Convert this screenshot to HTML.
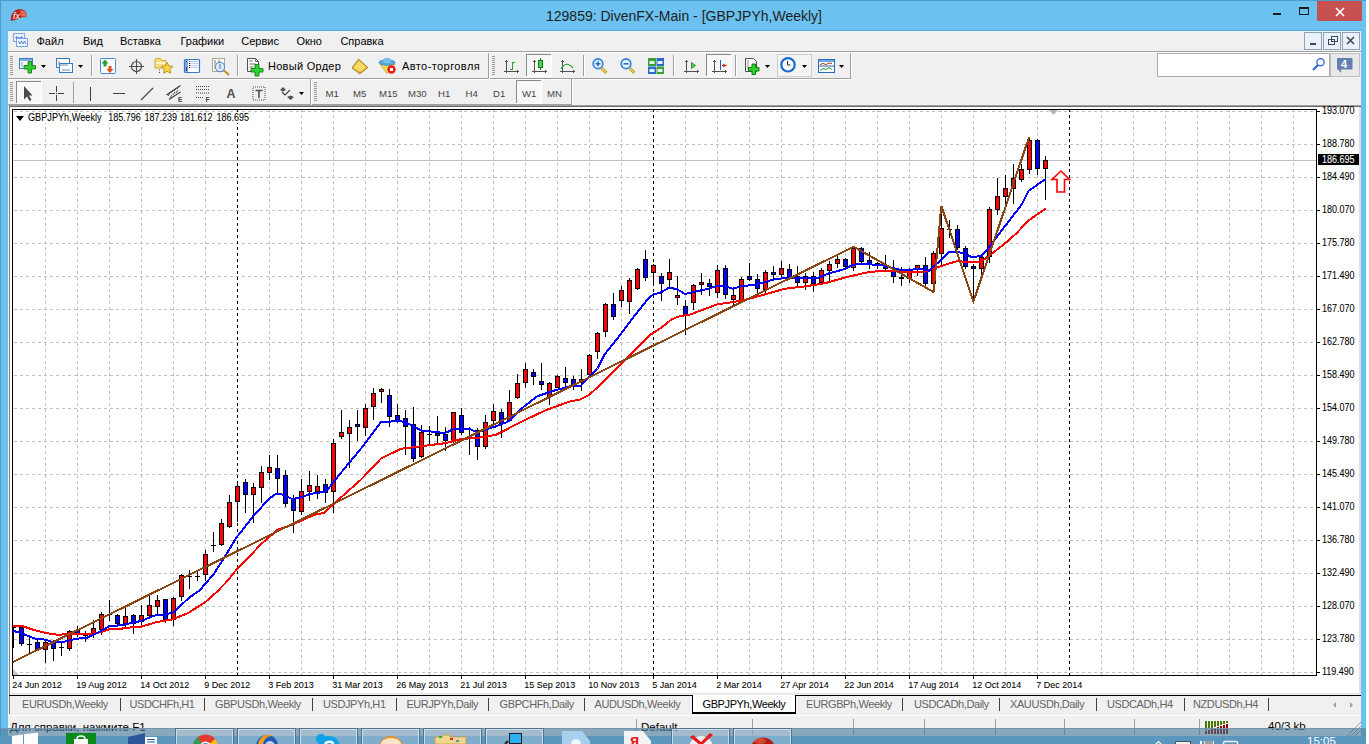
<!DOCTYPE html><html><head><meta charset="utf-8"><style>html,body{margin:0;padding:0;width:1369px;height:744px;overflow:hidden;background:#fff}svg{display:block}text{font-family:"Liberation Sans", sans-serif}</style></head><body>
<svg width="1369" height="744" viewBox="0 0 1369 744">
<rect x="0" y="0" width="1366" height="744" fill="#6bc1ef"/>
<rect x="0" y="0" width="1366" height="1" fill="#4f9bcb"/>
<rect x="0" y="0" width="1" height="744" fill="#4f9bcb"/>
<path d="M11,21 C10,15 14,9 20,9 C24,9 27,12 27,16 C26,17 24,18 22,17 C20,18 17,20 11,21 Z" fill="#b8251b"/>
<path d="M20,10 C24,10 27,13 27,16 C25,17 23,17 21,16 Z" fill="#e06a5a"/>
<text x="13" y="19" font-size="9" font-style="italic" fill="#fff" font-family="Liberation Serif">fx</text>
<text x="546" y="21" font-size="14" fill="#1e1e1e">129859: DivenFX-Main - [GBPJPYh,Weekly]</text>
<rect x="1273" y="13" width="8" height="2" fill="#1a1a1a"/>
<rect x="1299.5" y="7.5" width="9" height="7" fill="none" stroke="#1a1a1a" stroke-width="1"/><rect x="1299" y="7" width="10" height="2" fill="#1a1a1a"/>
<rect x="1317" y="1" width="45" height="20" fill="#c75050"/>
<path d="M1336,8 L1344,16 M1344,8 L1336,16" stroke="#fff" stroke-width="1.6"/>
<rect x="8" y="30" width="1353" height="1" fill="#5aaadc"/>
<rect x="8" y="31" width="1353" height="697" fill="#f0f0f0"/>
<rect x="13.5" y="33.5" width="11" height="8" fill="#eef4ff" stroke="#2f6fe0" stroke-dasharray="1.2 0.8"/>
<path d="M16,37.5 h6 M17,36 l-1.5,1.5 l1.5,1.5 M21,36 l1.5,1.5 l-1.5,1.5" stroke="#4a80d8" fill="none" stroke-width="0.8"/>
<rect x="16.5" y="38.5" width="11" height="8" fill="#eef4ff" stroke="#2f6fe0" stroke-dasharray="1.2 0.8"/>
<path d="M18.5,41 l1.5,3 l1.5,-3 l1.5,3 l1.5,-3 l1.5,3" stroke="#3a70d0" fill="none" stroke-width="0.8"/>
<text x="36.5" y="45" font-size="11" fill="#000">Файл</text>
<text x="83" y="45" font-size="11" fill="#000">Вид</text>
<text x="120" y="45" font-size="11" fill="#000">Вставка</text>
<text x="180.5" y="45" font-size="11" fill="#000">Графики</text>
<text x="241.3" y="45" font-size="11" fill="#000">Сервис</text>
<text x="296.4" y="45" font-size="11" fill="#000">Окно</text>
<text x="340.4" y="45" font-size="11" fill="#000">Справка</text>
<rect x="1304.5" y="32.5" width="17" height="17" fill="#eaf1f8" stroke="#8ea3b8"/>
<rect x="1310" y="43" width="6" height="2" fill="#404a55"/>
<rect x="1323.5" y="32.5" width="17" height="17" fill="#eaf1f8" stroke="#8ea3b8"/>
<rect x="1328.5" y="39.5" width="6" height="5" fill="none" stroke="#404a55"/><rect x="1331.5" y="36.5" width="6" height="5" fill="none" stroke="#404a55"/>
<rect x="1342.5" y="32.5" width="17" height="17" fill="#eaf1f8" stroke="#8ea3b8"/>
<path d="M1347,37 l7,7 M1354,37 l-7,7" stroke="#404a55" stroke-width="1.6"/>
<rect x="8" y="51" width="1353" height="1" fill="#a0a0a0"/>
<rect x="8" y="52" width="1353" height="1" fill="#ffffff"/>
<rect x="8" y="78" width="481" height="1" fill="#a0a0a0"/>
<rect x="8" y="79" width="482" height="1" fill="#ffffff"/>
<rect x="488" y="53" width="1" height="26" fill="#a0a0a0"/>
<rect x="489" y="53" width="1" height="27" fill="#ffffff"/>
<rect x="490" y="78" width="361" height="1" fill="#a0a0a0"/>
<rect x="490" y="79" width="362" height="1" fill="#ffffff"/>
<rect x="850" y="53" width="1" height="26" fill="#a0a0a0"/>
<rect x="851" y="53" width="1" height="27" fill="#ffffff"/>
<rect x="8" y="104" width="303" height="1" fill="#a0a0a0"/>
<rect x="8" y="105" width="304" height="1" fill="#ffffff"/>
<rect x="310" y="79" width="1" height="26" fill="#a0a0a0"/>
<rect x="311" y="79" width="1" height="27" fill="#ffffff"/>
<rect x="312" y="104" width="260" height="1" fill="#a0a0a0"/>
<rect x="312" y="105" width="261" height="1" fill="#ffffff"/>
<rect x="571" y="79" width="1" height="26" fill="#a0a0a0"/>
<rect x="572" y="79" width="1" height="27" fill="#ffffff"/>
<rect x="10" y="56" width="3" height="1" fill="#9a9a9a"/>
<rect x="10" y="58" width="3" height="1" fill="#9a9a9a"/>
<rect x="10" y="60" width="3" height="1" fill="#9a9a9a"/>
<rect x="10" y="62" width="3" height="1" fill="#9a9a9a"/>
<rect x="10" y="64" width="3" height="1" fill="#9a9a9a"/>
<rect x="10" y="66" width="3" height="1" fill="#9a9a9a"/>
<rect x="10" y="68" width="3" height="1" fill="#9a9a9a"/>
<rect x="10" y="70" width="3" height="1" fill="#9a9a9a"/>
<rect x="10" y="72" width="3" height="1" fill="#9a9a9a"/>
<rect x="10" y="74" width="3" height="1" fill="#9a9a9a"/>
<rect x="492" y="56" width="3" height="1" fill="#9a9a9a"/>
<rect x="492" y="58" width="3" height="1" fill="#9a9a9a"/>
<rect x="492" y="60" width="3" height="1" fill="#9a9a9a"/>
<rect x="492" y="62" width="3" height="1" fill="#9a9a9a"/>
<rect x="492" y="64" width="3" height="1" fill="#9a9a9a"/>
<rect x="492" y="66" width="3" height="1" fill="#9a9a9a"/>
<rect x="492" y="68" width="3" height="1" fill="#9a9a9a"/>
<rect x="492" y="70" width="3" height="1" fill="#9a9a9a"/>
<rect x="492" y="72" width="3" height="1" fill="#9a9a9a"/>
<rect x="492" y="74" width="3" height="1" fill="#9a9a9a"/>
<rect x="10" y="82" width="3" height="1" fill="#9a9a9a"/>
<rect x="10" y="84" width="3" height="1" fill="#9a9a9a"/>
<rect x="10" y="86" width="3" height="1" fill="#9a9a9a"/>
<rect x="10" y="88" width="3" height="1" fill="#9a9a9a"/>
<rect x="10" y="90" width="3" height="1" fill="#9a9a9a"/>
<rect x="10" y="92" width="3" height="1" fill="#9a9a9a"/>
<rect x="10" y="94" width="3" height="1" fill="#9a9a9a"/>
<rect x="10" y="96" width="3" height="1" fill="#9a9a9a"/>
<rect x="10" y="98" width="3" height="1" fill="#9a9a9a"/>
<rect x="10" y="100" width="3" height="1" fill="#9a9a9a"/>
<rect x="314" y="82" width="3" height="1" fill="#9a9a9a"/>
<rect x="314" y="84" width="3" height="1" fill="#9a9a9a"/>
<rect x="314" y="86" width="3" height="1" fill="#9a9a9a"/>
<rect x="314" y="88" width="3" height="1" fill="#9a9a9a"/>
<rect x="314" y="90" width="3" height="1" fill="#9a9a9a"/>
<rect x="314" y="92" width="3" height="1" fill="#9a9a9a"/>
<rect x="314" y="94" width="3" height="1" fill="#9a9a9a"/>
<rect x="314" y="96" width="3" height="1" fill="#9a9a9a"/>
<rect x="314" y="98" width="3" height="1" fill="#9a9a9a"/>
<rect x="314" y="100" width="3" height="1" fill="#9a9a9a"/>
<rect x="19.5" y="58.5" width="13" height="10" fill="#fff" stroke="#3b78c2"/><rect x="20" y="59" width="12" height="2" fill="#7fb0e8"/>
<path d="M22,62 v5" stroke="#6a8cb0"/>
<path d="M28,61.5 h3.5 v4 h4 v3.5 h-4 v4 h-3.5 v-4 h-4 v-3.5 h4 z" fill="#30d030" stroke="#128012" stroke-width="0.9"/>
<path d="M41,65 h5 l-2.5,3 z" fill="#000"/>
<rect x="56.5" y="58.5" width="13" height="9" fill="#fff" stroke="#3b78c2"/><rect x="59.5" y="63.5" width="13" height="9" fill="#fff" stroke="#3b78c2"/>
<path d="M59,61 v4 M60,65 h8 M62,70 h8" stroke="#6a8cb0"/>
<path d="M78,65 h5 l-2.5,3 z" fill="#000"/>
<rect x="91" y="55" width="1" height="21" fill="#a0a0a0"/><rect x="92" y="55" width="1" height="21" fill="#ffffff"/>
<rect x="100.5" y="58.5" width="15" height="15" rx="1" fill="#fff" stroke="#4a8ad8"/>
<path d="M105,59.5 l3.5,4 h-2 v3 h-3 v-3 h-2 z" fill="#2ca02c"/><path d="M110,73 l3.5,-4 h-2 v-3 h-3 v3 h-2 z" fill="#e05020"/>
<circle cx="136.5" cy="66.5" r="5" fill="none" stroke="#505050" stroke-width="1.2"/><path d="M136.5,59 v15 M129,66.5 h15" stroke="#505050" stroke-width="1.1"/>
<path d="M155,60 q0,-1.5 1.5,-1.5 h4 l1.5,2 h4 v7.5 h-11 z" fill="#f4dc80" stroke="#c8a030" stroke-width="0.9"/><rect x="156" y="62" width="9.5" height="2" fill="#fff4c0"/>
<path d="M159.5,69.5 v1 M159.5,72 v1" stroke="#404040" stroke-width="1"/>
<path d="M167.1,62.3 l1.75,3.6 3.95,.55 -2.85,2.8 .7,3.9 -3.55,-1.85 -3.55,1.85 .7,-3.9 -2.85,-2.8 3.95,-.55 z" fill="#f8d848" stroke="#b88a10" stroke-width="0.9"/>
<rect x="184.5" y="59.5" width="15" height="13" rx="1" fill="#fff" stroke="#3a78c8" stroke-width="1.2"/><rect x="185" y="60" width="3" height="12" fill="#7aaae0"/><rect x="186" y="67" width="1" height="4" fill="#404040"/>
<path d="M190,61.5 h8.5 M190,63.5 h8.5 M190,65.5 h8.5 M190,67.5 h8.5" stroke="#a8c4ec" stroke-width="0.8"/>
<rect x="186" y="61" width="1" height="1" fill="#000"/><rect x="189" y="61" width="1" height="1" fill="#e02020"/><rect x="189" y="63" width="1" height="1" fill="#000"/><rect x="189" y="65" width="1" height="1" fill="#000"/><rect x="189" y="67" width="1" height="1" fill="#e02020"/>
<rect x="212.5" y="58.5" width="12" height="13" fill="#faf6ec" stroke="#b0a890"/><path d="M215,60 v9 M214,62 h2 M219,60 v5 M218,61 h2" stroke="#8090a0" stroke-width="0.8"/>
<path d="M224,70.5 l5,4.5" stroke="#c09020" stroke-width="2.2"/><circle cx="220" cy="67" r="4.6" fill="#dcecf8" fill-opacity="0.9" stroke="#5a90d0" stroke-width="1.1"/><rect x="219" y="64" width="2" height="5" fill="#9ab0c8"/>
<rect x="237" y="55" width="1" height="21" fill="#a0a0a0"/><rect x="238" y="55" width="1" height="21" fill="#ffffff"/>
<path d="M247.5,58.5 h8 l3,3 v10 h-11 z" fill="#fafafa" stroke="#505050"/><path d="M255.5,58.5 v3 h3" fill="none" stroke="#505050" stroke-width="0.8"/>
<path d="M249.5,61 h3 M249.5,64 h6 M249.5,67 h4" stroke="#707070" stroke-width="1"/>
<path d="M255,64.5 h4 v4 h4 v3.5 h-4 v4 h-4 v-4 h-4 v-3.5 h4 z" fill="#30d030" stroke="#108010" stroke-width="0.9"/>
<text x="268" y="70" font-size="11" letter-spacing="0.28" fill="#000">Новый Ордер</text>
<path d="M352,67.8 L358.7,59.3 L367.8,67.5 L359.9,73.9 Z" fill="#e8be30" stroke="#9a6a18" stroke-width="0.9"/><path d="M353.5,67.5 L359,60.8 L366,67 L360,71.5 Z" fill="#f6dc60"/><path d="M353,69 L360,73 L367,68" stroke="#c8a050" fill="none" stroke-width="0.8"/>
<path d="M380,64 L387,73.6 L395,64 Z" fill="#f2dc50" stroke="#c8a030" stroke-width="0.8"/>
<ellipse cx="387" cy="62.5" rx="8" ry="2.8" fill="#58a8e0" stroke="#3a88c8" stroke-width="0.8"/><ellipse cx="387" cy="60.5" rx="4" ry="2.8" fill="#7ac0ee"/>
<circle cx="391.5" cy="69.5" r="4.2" fill="#e82010"/><rect x="390" y="68" width="3" height="3" fill="#fff"/>
<text x="402" y="70" font-size="11" letter-spacing="0.42" fill="#000">Авто-торговля</text>
<g shape-rendering="crispEdges"><rect x="506" y="60" width="1" height="13" fill="#505050"/><rect x="504" y="71" width="15" height="1" fill="#505050"/><rect x="505" y="61" width="3" height="1" fill="#505050"/><rect x="517" y="70" width="1" height="3" fill="#505050"/></g>
<g shape-rendering="crispEdges"><rect x="512" y="62" width="1" height="8" fill="#28a028"/><rect x="512" y="62" width="3" height="1" fill="#28a028"/><rect x="510" y="69" width="3" height="1" fill="#28a028"/></g>
<rect x="526" y="54" width="25" height="22" fill="#f8f8f8"/>
<rect x="526" y="54" width="25" height="1" fill="#8a8a8a"/><rect x="526" y="54" width="1" height="22" fill="#8a8a8a"/>
<rect x="526" y="76" width="26" height="1" fill="#ffffff"/><rect x="551" y="54" width="1" height="22" fill="#ffffff"/>
<g shape-rendering="crispEdges"><rect x="534" y="60" width="1" height="13" fill="#505050"/><rect x="532" y="71" width="15" height="1" fill="#505050"/><rect x="533" y="61" width="3" height="1" fill="#505050"/><rect x="545" y="70" width="1" height="3" fill="#505050"/></g>
<g shape-rendering="crispEdges"><rect x="540" y="58" width="1" height="12" fill="#207020"/><rect x="538" y="60" width="5" height="8" fill="#207020"/><rect x="539" y="61" width="3" height="6" fill="#3ce03c"/></g>
<g shape-rendering="crispEdges"><rect x="562" y="60" width="1" height="13" fill="#505050"/><rect x="560" y="71" width="15" height="1" fill="#505050"/><rect x="561" y="61" width="3" height="1" fill="#505050"/><rect x="573" y="70" width="1" height="3" fill="#505050"/></g>
<path d="M561,69 Q566,60 573,68" stroke="#28a028" fill="none" stroke-width="1.2"/>
<rect x="583" y="55" width="1" height="21" fill="#a0a0a0"/><rect x="584" y="55" width="1" height="21" fill="#ffffff"/>
<path d="M601.5,68 l5,5" stroke="#b89010" stroke-width="3"/><path d="M601.5,68 l5,5" stroke="#f0d060" stroke-width="1.4"/>
<circle cx="598" cy="63.8" r="4.8" fill="#e8f6ff" stroke="#3a86d8" stroke-width="1.8"/>
<path d="M595.5,63.8 h5 M598,61.3 v5" stroke="#2a70c0" stroke-width="1.6"/>
<path d="M629.5,68 l5,5" stroke="#b89010" stroke-width="3"/><path d="M629.5,68 l5,5" stroke="#f0d060" stroke-width="1.4"/>
<circle cx="626" cy="63.8" r="4.8" fill="#e8f6ff" stroke="#3a86d8" stroke-width="1.8"/>
<path d="M623.5,63.8 h5" stroke="#2a70c0" stroke-width="1.6"/>
<rect x="648" y="58" width="8" height="8" fill="#3aa030"/><rect x="656.5" y="58" width="7.5" height="8" fill="#2a6ad0"/><rect x="648" y="66.5" width="8" height="7.5" fill="#2a6ad0"/><rect x="656.5" y="66.5" width="7.5" height="7.5" fill="#3aa030"/>
<rect x="649.5" y="61" width="5" height="3" fill="#e8f0f8"/>
<rect x="657.5" y="61" width="5" height="3" fill="#e8f0f8"/>
<rect x="649.5" y="69" width="5" height="3" fill="#e8f0f8"/>
<rect x="657.5" y="69" width="5" height="3" fill="#e8f0f8"/>
<rect x="673" y="55" width="1" height="21" fill="#a0a0a0"/><rect x="674" y="55" width="1" height="21" fill="#ffffff"/>
<g shape-rendering="crispEdges"><rect x="686" y="60" width="1" height="13" fill="#505050"/><rect x="684" y="71" width="15" height="1" fill="#505050"/><rect x="685" y="61" width="3" height="1" fill="#505050"/><rect x="697" y="70" width="1" height="3" fill="#505050"/></g>
<path d="M691.5,62.5 v6 l4,-3 z" fill="#50d050" stroke="#208020" stroke-width="0.8"/>
<rect x="706" y="54" width="25" height="22" fill="#f8f8f8"/>
<rect x="706" y="54" width="25" height="1" fill="#8a8a8a"/><rect x="706" y="54" width="1" height="22" fill="#8a8a8a"/>
<rect x="706" y="76" width="26" height="1" fill="#ffffff"/><rect x="731" y="54" width="1" height="22" fill="#ffffff"/>
<g shape-rendering="crispEdges"><rect x="714" y="60" width="1" height="13" fill="#505050"/><rect x="712" y="71" width="15" height="1" fill="#505050"/><rect x="713" y="61" width="3" height="1" fill="#505050"/><rect x="725" y="70" width="1" height="3" fill="#505050"/></g>
<rect x="720" y="60" width="1" height="10" fill="#2060c0"/><path d="M721.5,65.5 l3,-2 v1.3 h2 v1.4 h-2 v1.3 z" fill="#d03010"/>
<rect x="735" y="55" width="1" height="21" fill="#a0a0a0"/><rect x="736" y="55" width="1" height="21" fill="#ffffff"/>
<path d="M745.5,58.5 h8 l3,3 v10 h-11 z" fill="#fafafa" stroke="#505050"/><path d="M748,60 v10" stroke="#909090"/>
<path d="M752,64 h3.5 v3.5 h3.5 v3.5 h-3.5 v3.5 h-3.5 v-3.5 h-3.5 v-3.5 h3.5 z" fill="#30d030" stroke="#108010"/>
<path d="M765,65 h5 l-2.5,3 z" fill="#000"/>
<rect x="777.5" y="54.5" width="34" height="22" fill="#f4f4f4" stroke="#cfcfcf"/>
<circle cx="788" cy="64.8" r="7.8" fill="#1a6ad0"/><circle cx="788" cy="64.8" r="5.6" fill="#f4f8ff"/><path d="M787.5,61 v4 h3" stroke="#303030" fill="none"/>
<path d="M802,65 h5 l-2.5,3 z" fill="#000"/>
<rect x="818.5" y="59.5" width="16" height="13" fill="#fff" stroke="#2a6ac0"/><rect x="819" y="60" width="15" height="2" fill="#6aaae8"/><rect x="819" y="65.5" width="15" height="1" fill="#2a6ac0"/>
<path d="M820,64.5 l3,-1 3,1 3,-1.5 3,0.5" stroke="#b03a20" fill="none"/><path d="M820,70.5 l3,-2 3,1 3,-2 3,2" stroke="#30a030" fill="none"/>
<path d="M839,65 h5 l-2.5,3 z" fill="#000"/>
<rect x="1157.5" y="53.5" width="172" height="23" fill="#fff" stroke="#ababab"/>
<circle cx="1320.5" cy="62.3" r="3.6" fill="none" stroke="#2a62d8" stroke-width="1.3"/><path d="M1318,65 l-5,5" stroke="#2a62d8" stroke-width="2.2"/>
<rect x="1330.5" y="53.5" width="29" height="23" fill="#e8e8e8" stroke="#c0c0c0"/>
<path d="M1337,58 h14.5 a1,1 0 0 1 1,1 v9.5 a1,1 0 0 1 -1,1 h-10.5 l0.5,3.5 l-3.5,-3.5 a1,1 0 0 1 -1,-1 v-9.5 a1,1 0 0 1 1,-1 z" fill="#6480b0"/>
<text x="1341" y="68" font-size="11" font-weight="bold" fill="#fff">4</text>
<rect x="16" y="81" width="25" height="22" fill="#f8f8f8"/>
<rect x="16" y="81" width="25" height="1" fill="#8a8a8a"/><rect x="16" y="81" width="1" height="22" fill="#8a8a8a"/>
<rect x="16" y="103" width="26" height="1" fill="#ffffff"/><rect x="41" y="81" width="1" height="22" fill="#ffffff"/>
<path d="M24,86 V99.5 L27,96.5 L29.5,101 L31.5,100 L29,95.5 H32.5 Z" fill="#4a4a4a"/>
<path d="M56.5,86 v6 M56.5,95 v6 M49,93.5 h6 M58,93.5 h6" stroke="#404040"/><rect x="56" y="93" width="1" height="1" fill="#404040"/>
<rect x="73" y="82" width="1" height="21" fill="#a0a0a0"/>
<rect x="90" y="87" width="1" height="14" fill="#404040"/>
<rect x="113" y="93" width="12" height="1" fill="#404040"/>
<path d="M141,100 L153,88" stroke="#404040" stroke-width="1.1"/>
<path d="M166.5,95 L180.5,85.5 M169,99.5 L180.5,92" stroke="#404040" stroke-width="1.1"/>
<path d="M168,96 l2,-3 M170,98 l2,-3 M171,93 l2,-3 M173,95 l2,-3 M174,91 l2,-3 M176,93 l2,-3 M177,89 l2,-3" stroke="#404040" stroke-width="0.9"/>
<text x="178" y="102" font-size="6.5" font-weight="bold" fill="#404040">E</text>
<path d="M196,86.5 h13 M196,89.5 h13 M196,93 h13 M196,97.5 h8" stroke="#404040" stroke-dasharray="1 1"/><text x="205.5" y="102" font-size="6.5" font-weight="bold" fill="#404040">F</text>
<text x="226.5" y="98" font-size="12.5" font-weight="bold" fill="#505050">A</text>
<rect x="253" y="87" width="12" height="13" fill="none" stroke="#505050" stroke-dasharray="1 1"/><path d="M255.5,90.5 h7 M259,90.5 v7.5" stroke="#505050" stroke-width="1.6"/>
<path d="M280,90 l3,-3 l3,3 l-3,1.5 z M287,97 l3.5,3 l3.5,-3 l-3.5,-1.5 z" fill="#505050"/><path d="M282,92 l3,3 l5,-5" stroke="#404040" fill="none" stroke-width="1.1"/>
<path d="M299,92 h5 l-2.5,3 z" fill="#000"/>
<rect x="310" y="80" width="1" height="25" fill="#a0a0a0"/>
<text x="325.5" y="97" font-size="9.6" fill="#444">M1</text>
<text x="353" y="97" font-size="9.6" fill="#444">M5</text>
<text x="379" y="97" font-size="9.6" fill="#444">M15</text>
<text x="408" y="97" font-size="9.6" fill="#444">M30</text>
<text x="438" y="97" font-size="9.6" fill="#444">H1</text>
<text x="465.5" y="97" font-size="9.6" fill="#444">H4</text>
<text x="493" y="97" font-size="9.6" fill="#444">D1</text>
<rect x="516" y="80" width="25" height="23" fill="#f8f8f8"/>
<rect x="516" y="80" width="25" height="1" fill="#8a8a8a"/><rect x="516" y="80" width="1" height="23" fill="#8a8a8a"/>
<rect x="516" y="103" width="26" height="1" fill="#ffffff"/><rect x="541" y="80" width="1" height="23" fill="#ffffff"/>
<text x="522" y="97" font-size="9.6" fill="#444">W1</text>
<text x="547" y="97" font-size="9.6" fill="#444">MN</text>
<rect x="9" y="105" width="1352" height="1" fill="#a0a0a0"/><rect x="9" y="106" width="1352" height="1" fill="#6a6a6a"/>
<rect x="9" y="105" width="1" height="590" fill="#808080"/>
<rect x="10" y="107" width="1350" height="587" fill="#ffffff"/>
<rect x="1359" y="107" width="2" height="587" fill="#e0e0e0"/>
<rect x="10" y="693" width="1350" height="1" fill="#e4e4e4"/>
<g shape-rendering="crispEdges">
<line x1="14" y1="111.5" x2="1316" y2="111.5" stroke="#c0c0c0" stroke-dasharray="3 3"/>
<line x1="14" y1="144.5" x2="1316" y2="144.5" stroke="#c0c0c0" stroke-dasharray="3 3"/>
<line x1="14" y1="177.5" x2="1316" y2="177.5" stroke="#c0c0c0" stroke-dasharray="3 3"/>
<line x1="14" y1="210.5" x2="1316" y2="210.5" stroke="#c0c0c0" stroke-dasharray="3 3"/>
<line x1="14" y1="243.5" x2="1316" y2="243.5" stroke="#c0c0c0" stroke-dasharray="3 3"/>
<line x1="14" y1="276.5" x2="1316" y2="276.5" stroke="#c0c0c0" stroke-dasharray="3 3"/>
<line x1="14" y1="309.5" x2="1316" y2="309.5" stroke="#c0c0c0" stroke-dasharray="3 3"/>
<line x1="14" y1="342.5" x2="1316" y2="342.5" stroke="#c0c0c0" stroke-dasharray="3 3"/>
<line x1="14" y1="375.5" x2="1316" y2="375.5" stroke="#c0c0c0" stroke-dasharray="3 3"/>
<line x1="14" y1="408.5" x2="1316" y2="408.5" stroke="#c0c0c0" stroke-dasharray="3 3"/>
<line x1="14" y1="441.5" x2="1316" y2="441.5" stroke="#c0c0c0" stroke-dasharray="3 3"/>
<line x1="14" y1="474.5" x2="1316" y2="474.5" stroke="#c0c0c0" stroke-dasharray="3 3"/>
<line x1="14" y1="507.5" x2="1316" y2="507.5" stroke="#c0c0c0" stroke-dasharray="3 3"/>
<line x1="14" y1="540.5" x2="1316" y2="540.5" stroke="#c0c0c0" stroke-dasharray="3 3"/>
<line x1="14" y1="573.5" x2="1316" y2="573.5" stroke="#c0c0c0" stroke-dasharray="3 3"/>
<line x1="14" y1="606.5" x2="1316" y2="606.5" stroke="#c0c0c0" stroke-dasharray="3 3"/>
<line x1="14" y1="639.5" x2="1316" y2="639.5" stroke="#c0c0c0" stroke-dasharray="3 3"/>
<line x1="14" y1="672.5" x2="1316" y2="672.5" stroke="#c0c0c0" stroke-dasharray="3 3"/>
<line x1="45.5" y1="109" x2="45.5" y2="675" stroke="#c0c0c0" stroke-dasharray="3 3"/>
<line x1="77.5" y1="109" x2="77.5" y2="675" stroke="#c0c0c0" stroke-dasharray="3 3"/>
<line x1="109.5" y1="109" x2="109.5" y2="675" stroke="#c0c0c0" stroke-dasharray="3 3"/>
<line x1="141.5" y1="109" x2="141.5" y2="675" stroke="#c0c0c0" stroke-dasharray="3 3"/>
<line x1="173.5" y1="109" x2="173.5" y2="675" stroke="#c0c0c0" stroke-dasharray="3 3"/>
<line x1="205.5" y1="109" x2="205.5" y2="675" stroke="#c0c0c0" stroke-dasharray="3 3"/>
<line x1="237.5" y1="109" x2="237.5" y2="675" stroke="#c0c0c0" stroke-dasharray="3 3"/>
<line x1="269.5" y1="109" x2="269.5" y2="675" stroke="#c0c0c0" stroke-dasharray="3 3"/>
<line x1="301.5" y1="109" x2="301.5" y2="675" stroke="#c0c0c0" stroke-dasharray="3 3"/>
<line x1="333.5" y1="109" x2="333.5" y2="675" stroke="#c0c0c0" stroke-dasharray="3 3"/>
<line x1="365.5" y1="109" x2="365.5" y2="675" stroke="#c0c0c0" stroke-dasharray="3 3"/>
<line x1="397.5" y1="109" x2="397.5" y2="675" stroke="#c0c0c0" stroke-dasharray="3 3"/>
<line x1="429.5" y1="109" x2="429.5" y2="675" stroke="#c0c0c0" stroke-dasharray="3 3"/>
<line x1="461.5" y1="109" x2="461.5" y2="675" stroke="#c0c0c0" stroke-dasharray="3 3"/>
<line x1="493.5" y1="109" x2="493.5" y2="675" stroke="#c0c0c0" stroke-dasharray="3 3"/>
<line x1="525.5" y1="109" x2="525.5" y2="675" stroke="#c0c0c0" stroke-dasharray="3 3"/>
<line x1="557.5" y1="109" x2="557.5" y2="675" stroke="#c0c0c0" stroke-dasharray="3 3"/>
<line x1="589.5" y1="109" x2="589.5" y2="675" stroke="#c0c0c0" stroke-dasharray="3 3"/>
<line x1="621.5" y1="109" x2="621.5" y2="675" stroke="#c0c0c0" stroke-dasharray="3 3"/>
<line x1="653.5" y1="109" x2="653.5" y2="675" stroke="#c0c0c0" stroke-dasharray="3 3"/>
<line x1="685.5" y1="109" x2="685.5" y2="675" stroke="#c0c0c0" stroke-dasharray="3 3"/>
<line x1="717.5" y1="109" x2="717.5" y2="675" stroke="#c0c0c0" stroke-dasharray="3 3"/>
<line x1="749.5" y1="109" x2="749.5" y2="675" stroke="#c0c0c0" stroke-dasharray="3 3"/>
<line x1="781.5" y1="109" x2="781.5" y2="675" stroke="#c0c0c0" stroke-dasharray="3 3"/>
<line x1="813.5" y1="109" x2="813.5" y2="675" stroke="#c0c0c0" stroke-dasharray="3 3"/>
<line x1="845.5" y1="109" x2="845.5" y2="675" stroke="#c0c0c0" stroke-dasharray="3 3"/>
<line x1="877.5" y1="109" x2="877.5" y2="675" stroke="#c0c0c0" stroke-dasharray="3 3"/>
<line x1="909.5" y1="109" x2="909.5" y2="675" stroke="#c0c0c0" stroke-dasharray="3 3"/>
<line x1="941.5" y1="109" x2="941.5" y2="675" stroke="#c0c0c0" stroke-dasharray="3 3"/>
<line x1="973.5" y1="109" x2="973.5" y2="675" stroke="#c0c0c0" stroke-dasharray="3 3"/>
<line x1="1005.5" y1="109" x2="1005.5" y2="675" stroke="#c0c0c0" stroke-dasharray="3 3"/>
<line x1="1037.5" y1="109" x2="1037.5" y2="675" stroke="#c0c0c0" stroke-dasharray="3 3"/>
<line x1="1069.5" y1="109" x2="1069.5" y2="675" stroke="#c0c0c0" stroke-dasharray="3 3"/>
<line x1="1101.5" y1="109" x2="1101.5" y2="675" stroke="#c0c0c0" stroke-dasharray="3 3"/>
<line x1="1133.5" y1="109" x2="1133.5" y2="675" stroke="#c0c0c0" stroke-dasharray="3 3"/>
<line x1="1165.5" y1="109" x2="1165.5" y2="675" stroke="#c0c0c0" stroke-dasharray="3 3"/>
<line x1="1197.5" y1="109" x2="1197.5" y2="675" stroke="#c0c0c0" stroke-dasharray="3 3"/>
<line x1="1229.5" y1="109" x2="1229.5" y2="675" stroke="#c0c0c0" stroke-dasharray="3 3"/>
<line x1="1261.5" y1="109" x2="1261.5" y2="675" stroke="#c0c0c0" stroke-dasharray="3 3"/>
<line x1="1293.5" y1="109" x2="1293.5" y2="675" stroke="#c0c0c0" stroke-dasharray="3 3"/>
<rect x="13" y="160" width="1303" height="1" fill="#c0c0c0"/>
<line x1="237.5" y1="109" x2="237.5" y2="675" stroke="#000" stroke-dasharray="3 3"/>
<line x1="653.5" y1="109" x2="653.5" y2="675" stroke="#000" stroke-dasharray="3 3"/>
<line x1="1069.5" y1="109" x2="1069.5" y2="675" stroke="#000" stroke-dasharray="3 3"/>
</g>
<g shape-rendering="crispEdges">
<rect x="13" y="627" width="1" height="21" fill="#000"/>
<rect x="13" y="627" width="1" height="20" fill="#000"/><rect x="13" y="627" width="3" height="1" fill="#000"/>
<rect x="21" y="626" width="1" height="20" fill="#000"/>
<rect x="19" y="627" width="5" height="17" fill="#000"/>
<rect x="20" y="628" width="3" height="15" fill="#0000ff"/>
<rect x="29" y="636" width="1" height="17" fill="#000"/>
<rect x="27" y="644" width="5" height="1" fill="#000"/>
<rect x="37" y="640" width="1" height="11" fill="#000"/>
<rect x="35" y="642" width="5" height="8" fill="#000"/>
<rect x="36" y="643" width="3" height="6" fill="#0000ff"/>
<rect x="45" y="641" width="1" height="22" fill="#000"/>
<rect x="43" y="642" width="5" height="8" fill="#000"/>
<rect x="44" y="643" width="3" height="6" fill="#ff0000"/>
<rect x="53" y="640" width="1" height="21" fill="#000"/>
<rect x="51" y="641" width="5" height="8" fill="#000"/>
<rect x="52" y="642" width="3" height="6" fill="#0000ff"/>
<rect x="61" y="643" width="1" height="13" fill="#000"/>
<rect x="59" y="647" width="5" height="1" fill="#000"/>
<rect x="69" y="630" width="1" height="21" fill="#000"/>
<rect x="67" y="631" width="5" height="18" fill="#000"/>
<rect x="68" y="632" width="3" height="16" fill="#ff0000"/>
<rect x="77" y="626" width="1" height="11" fill="#000"/>
<rect x="75" y="630" width="5" height="5" fill="#000"/>
<rect x="76" y="631" width="3" height="3" fill="#0000ff"/>
<rect x="85" y="631" width="1" height="11" fill="#000"/>
<rect x="83" y="635" width="5" height="1" fill="#000"/>
<rect x="93" y="620" width="1" height="18" fill="#000"/>
<rect x="91" y="628" width="5" height="7" fill="#000"/>
<rect x="92" y="629" width="3" height="5" fill="#ff0000"/>
<rect x="101" y="612" width="1" height="23" fill="#000"/>
<rect x="99" y="614" width="5" height="16" fill="#000"/>
<rect x="100" y="615" width="3" height="14" fill="#ff0000"/>
<rect x="109" y="600" width="1" height="21" fill="#000"/>
<rect x="107" y="614" width="5" height="1" fill="#000"/>
<rect x="117" y="614" width="1" height="12" fill="#000"/>
<rect x="115" y="615" width="5" height="9" fill="#000"/>
<rect x="116" y="616" width="3" height="7" fill="#0000ff"/>
<rect x="125" y="608" width="1" height="19" fill="#000"/>
<rect x="123" y="616" width="5" height="8" fill="#000"/>
<rect x="124" y="617" width="3" height="6" fill="#ff0000"/>
<rect x="133" y="614" width="1" height="20" fill="#000"/>
<rect x="131" y="615" width="5" height="9" fill="#000"/>
<rect x="132" y="616" width="3" height="7" fill="#0000ff"/>
<rect x="141" y="605" width="1" height="21" fill="#000"/>
<rect x="139" y="615" width="5" height="7" fill="#000"/>
<rect x="140" y="616" width="3" height="5" fill="#ff0000"/>
<rect x="149" y="596" width="1" height="22" fill="#000"/>
<rect x="147" y="605" width="5" height="11" fill="#000"/>
<rect x="148" y="606" width="3" height="9" fill="#ff0000"/>
<rect x="157" y="595" width="1" height="20" fill="#000"/>
<rect x="155" y="600" width="5" height="7" fill="#000"/>
<rect x="156" y="601" width="3" height="5" fill="#ff0000"/>
<rect x="165" y="599" width="1" height="24" fill="#000"/>
<rect x="163" y="599" width="5" height="21" fill="#000"/>
<rect x="164" y="600" width="3" height="19" fill="#0000ff"/>
<rect x="173" y="597" width="1" height="29" fill="#000"/>
<rect x="171" y="598" width="5" height="22" fill="#000"/>
<rect x="172" y="599" width="3" height="20" fill="#ff0000"/>
<rect x="181" y="574" width="1" height="27" fill="#000"/>
<rect x="179" y="575" width="5" height="22" fill="#000"/>
<rect x="180" y="576" width="3" height="20" fill="#ff0000"/>
<rect x="189" y="570" width="1" height="19" fill="#000"/>
<rect x="187" y="576" width="5" height="1" fill="#000"/>
<rect x="197" y="572" width="1" height="9" fill="#000"/>
<rect x="195" y="576" width="5" height="1" fill="#000"/>
<rect x="205" y="550" width="1" height="31" fill="#000"/>
<rect x="203" y="554" width="5" height="21" fill="#000"/>
<rect x="204" y="555" width="3" height="19" fill="#ff0000"/>
<rect x="213" y="532" width="1" height="20" fill="#000"/>
<rect x="211" y="545" width="5" height="1" fill="#000"/>
<rect x="221" y="519" width="1" height="27" fill="#000"/>
<rect x="219" y="523" width="5" height="22" fill="#000"/>
<rect x="220" y="524" width="3" height="20" fill="#ff0000"/>
<rect x="229" y="495" width="1" height="33" fill="#000"/>
<rect x="227" y="502" width="5" height="25" fill="#000"/>
<rect x="228" y="503" width="3" height="23" fill="#ff0000"/>
<rect x="237" y="481" width="1" height="41" fill="#000"/>
<rect x="235" y="486" width="5" height="16" fill="#000"/>
<rect x="236" y="487" width="3" height="14" fill="#ff0000"/>
<rect x="245" y="479" width="1" height="34" fill="#000"/>
<rect x="243" y="482" width="5" height="13" fill="#000"/>
<rect x="244" y="483" width="3" height="11" fill="#0000ff"/>
<rect x="253" y="483" width="1" height="40" fill="#000"/>
<rect x="251" y="487" width="5" height="8" fill="#000"/>
<rect x="252" y="488" width="3" height="6" fill="#ff0000"/>
<rect x="261" y="466" width="1" height="37" fill="#000"/>
<rect x="259" y="472" width="5" height="16" fill="#000"/>
<rect x="260" y="473" width="3" height="14" fill="#ff0000"/>
<rect x="269" y="455" width="1" height="25" fill="#000"/>
<rect x="267" y="467" width="5" height="6" fill="#000"/>
<rect x="268" y="468" width="3" height="4" fill="#ff0000"/>
<rect x="277" y="455" width="1" height="40" fill="#000"/>
<rect x="275" y="468" width="5" height="11" fill="#000"/>
<rect x="276" y="469" width="3" height="9" fill="#0000ff"/>
<rect x="285" y="470" width="1" height="37" fill="#000"/>
<rect x="283" y="475" width="5" height="29" fill="#000"/>
<rect x="284" y="476" width="3" height="27" fill="#0000ff"/>
<rect x="293" y="495" width="1" height="38" fill="#000"/>
<rect x="291" y="498" width="5" height="13" fill="#000"/>
<rect x="292" y="499" width="3" height="11" fill="#0000ff"/>
<rect x="301" y="479" width="1" height="36" fill="#000"/>
<rect x="299" y="491" width="5" height="21" fill="#000"/>
<rect x="300" y="492" width="3" height="19" fill="#ff0000"/>
<rect x="309" y="471" width="1" height="30" fill="#000"/>
<rect x="307" y="485" width="5" height="7" fill="#000"/>
<rect x="308" y="486" width="3" height="5" fill="#ff0000"/>
<rect x="317" y="475" width="1" height="24" fill="#000"/>
<rect x="315" y="486" width="5" height="6" fill="#000"/>
<rect x="316" y="487" width="3" height="4" fill="#ff0000"/>
<rect x="325" y="479" width="1" height="24" fill="#000"/>
<rect x="323" y="484" width="5" height="9" fill="#000"/>
<rect x="324" y="485" width="3" height="7" fill="#0000ff"/>
<rect x="333" y="439" width="1" height="74" fill="#000"/>
<rect x="331" y="443" width="5" height="49" fill="#000"/>
<rect x="332" y="444" width="3" height="47" fill="#ff0000"/>
<rect x="341" y="410" width="1" height="29" fill="#000"/>
<rect x="339" y="432" width="5" height="5" fill="#000"/>
<rect x="340" y="433" width="3" height="3" fill="#ff0000"/>
<rect x="349" y="420" width="1" height="48" fill="#000"/>
<rect x="347" y="427" width="5" height="7" fill="#000"/>
<rect x="348" y="428" width="3" height="5" fill="#ff0000"/>
<rect x="357" y="410" width="1" height="31" fill="#000"/>
<rect x="355" y="424" width="5" height="3" fill="#000"/>
<rect x="356" y="425" width="3" height="1" fill="#0000ff"/>
<rect x="365" y="404" width="1" height="32" fill="#000"/>
<rect x="363" y="408" width="5" height="20" fill="#000"/>
<rect x="364" y="409" width="3" height="18" fill="#ff0000"/>
<rect x="373" y="388" width="1" height="32" fill="#000"/>
<rect x="371" y="393" width="5" height="14" fill="#000"/>
<rect x="372" y="394" width="3" height="12" fill="#ff0000"/>
<rect x="381" y="388" width="1" height="15" fill="#000"/>
<rect x="379" y="389" width="5" height="3" fill="#000"/>
<rect x="380" y="390" width="3" height="1" fill="#ff0000"/>
<rect x="389" y="389" width="1" height="38" fill="#000"/>
<rect x="387" y="395" width="5" height="22" fill="#000"/>
<rect x="388" y="396" width="3" height="20" fill="#0000ff"/>
<rect x="397" y="404" width="1" height="19" fill="#000"/>
<rect x="395" y="415" width="5" height="6" fill="#000"/>
<rect x="396" y="416" width="3" height="4" fill="#0000ff"/>
<rect x="405" y="410" width="1" height="45" fill="#000"/>
<rect x="403" y="418" width="5" height="9" fill="#000"/>
<rect x="404" y="419" width="3" height="7" fill="#0000ff"/>
<rect x="413" y="407" width="1" height="55" fill="#000"/>
<rect x="411" y="424" width="5" height="35" fill="#000"/>
<rect x="412" y="425" width="3" height="33" fill="#0000ff"/>
<rect x="421" y="425" width="1" height="33" fill="#000"/>
<rect x="419" y="432" width="5" height="25" fill="#000"/>
<rect x="420" y="433" width="3" height="23" fill="#ff0000"/>
<rect x="429" y="426" width="1" height="19" fill="#000"/>
<rect x="427" y="434" width="5" height="1" fill="#000"/>
<rect x="437" y="416" width="1" height="29" fill="#000"/>
<rect x="435" y="433" width="5" height="3" fill="#000"/>
<rect x="436" y="434" width="3" height="1" fill="#0000ff"/>
<rect x="445" y="427" width="1" height="24" fill="#000"/>
<rect x="443" y="434" width="5" height="7" fill="#000"/>
<rect x="444" y="435" width="3" height="5" fill="#0000ff"/>
<rect x="453" y="412" width="1" height="31" fill="#000"/>
<rect x="451" y="412" width="5" height="29" fill="#000"/>
<rect x="452" y="413" width="3" height="27" fill="#ff0000"/>
<rect x="461" y="408" width="1" height="27" fill="#000"/>
<rect x="459" y="415" width="5" height="18" fill="#000"/>
<rect x="460" y="416" width="3" height="16" fill="#0000ff"/>
<rect x="469" y="427" width="1" height="28" fill="#000"/>
<rect x="467" y="429" width="5" height="1" fill="#000"/>
<rect x="477" y="428" width="1" height="32" fill="#000"/>
<rect x="475" y="430" width="5" height="17" fill="#000"/>
<rect x="476" y="431" width="3" height="15" fill="#0000ff"/>
<rect x="485" y="415" width="1" height="34" fill="#000"/>
<rect x="483" y="422" width="5" height="25" fill="#000"/>
<rect x="484" y="423" width="3" height="23" fill="#ff0000"/>
<rect x="493" y="404" width="1" height="20" fill="#000"/>
<rect x="491" y="411" width="5" height="10" fill="#000"/>
<rect x="492" y="412" width="3" height="8" fill="#ff0000"/>
<rect x="501" y="409" width="1" height="29" fill="#000"/>
<rect x="499" y="412" width="5" height="12" fill="#000"/>
<rect x="500" y="413" width="3" height="10" fill="#0000ff"/>
<rect x="509" y="390" width="1" height="32" fill="#000"/>
<rect x="507" y="402" width="5" height="19" fill="#000"/>
<rect x="508" y="403" width="3" height="17" fill="#ff0000"/>
<rect x="517" y="374" width="1" height="25" fill="#000"/>
<rect x="515" y="383" width="5" height="15" fill="#000"/>
<rect x="516" y="384" width="3" height="13" fill="#ff0000"/>
<rect x="525" y="363" width="1" height="25" fill="#000"/>
<rect x="523" y="369" width="5" height="14" fill="#000"/>
<rect x="524" y="370" width="3" height="12" fill="#ff0000"/>
<rect x="533" y="369" width="1" height="16" fill="#000"/>
<rect x="531" y="372" width="5" height="5" fill="#000"/>
<rect x="532" y="373" width="3" height="3" fill="#0000ff"/>
<rect x="541" y="363" width="1" height="27" fill="#000"/>
<rect x="539" y="381" width="5" height="4" fill="#000"/>
<rect x="540" y="382" width="3" height="2" fill="#0000ff"/>
<rect x="549" y="382" width="1" height="23" fill="#000"/>
<rect x="547" y="383" width="5" height="14" fill="#000"/>
<rect x="548" y="384" width="3" height="12" fill="#ff0000"/>
<rect x="557" y="375" width="1" height="13" fill="#000"/>
<rect x="555" y="376" width="5" height="12" fill="#000"/>
<rect x="556" y="377" width="3" height="10" fill="#ff0000"/>
<rect x="565" y="367" width="1" height="20" fill="#000"/>
<rect x="563" y="378" width="5" height="5" fill="#000"/>
<rect x="564" y="379" width="3" height="3" fill="#0000ff"/>
<rect x="573" y="376" width="1" height="14" fill="#000"/>
<rect x="571" y="379" width="5" height="6" fill="#000"/>
<rect x="572" y="380" width="3" height="4" fill="#0000ff"/>
<rect x="581" y="369" width="1" height="22" fill="#000"/>
<rect x="579" y="379" width="5" height="4" fill="#000"/>
<rect x="580" y="380" width="3" height="2" fill="#ff0000"/>
<rect x="589" y="354" width="1" height="22" fill="#000"/>
<rect x="587" y="355" width="5" height="20" fill="#000"/>
<rect x="588" y="356" width="3" height="18" fill="#ff0000"/>
<rect x="597" y="332" width="1" height="27" fill="#000"/>
<rect x="595" y="333" width="5" height="19" fill="#000"/>
<rect x="596" y="334" width="3" height="17" fill="#ff0000"/>
<rect x="605" y="303" width="1" height="34" fill="#000"/>
<rect x="603" y="304" width="5" height="28" fill="#000"/>
<rect x="604" y="305" width="3" height="26" fill="#ff0000"/>
<rect x="613" y="293" width="1" height="27" fill="#000"/>
<rect x="611" y="304" width="5" height="13" fill="#000"/>
<rect x="612" y="305" width="3" height="11" fill="#0000ff"/>
<rect x="621" y="286" width="1" height="21" fill="#000"/>
<rect x="619" y="290" width="5" height="11" fill="#000"/>
<rect x="620" y="291" width="3" height="9" fill="#ff0000"/>
<rect x="629" y="278" width="1" height="36" fill="#000"/>
<rect x="627" y="280" width="5" height="22" fill="#000"/>
<rect x="628" y="281" width="3" height="20" fill="#ff0000"/>
<rect x="637" y="268" width="1" height="22" fill="#000"/>
<rect x="635" y="269" width="5" height="20" fill="#000"/>
<rect x="636" y="270" width="3" height="18" fill="#ff0000"/>
<rect x="645" y="250" width="1" height="31" fill="#000"/>
<rect x="643" y="259" width="5" height="19" fill="#000"/>
<rect x="644" y="260" width="3" height="17" fill="#0000ff"/>
<rect x="653" y="264" width="1" height="22" fill="#000"/>
<rect x="651" y="265" width="5" height="8" fill="#000"/>
<rect x="652" y="266" width="3" height="6" fill="#ff0000"/>
<rect x="661" y="273" width="1" height="28" fill="#000"/>
<rect x="659" y="276" width="5" height="8" fill="#000"/>
<rect x="660" y="277" width="3" height="6" fill="#0000ff"/>
<rect x="669" y="259" width="1" height="28" fill="#000"/>
<rect x="667" y="272" width="5" height="8" fill="#000"/>
<rect x="668" y="273" width="3" height="6" fill="#ff0000"/>
<rect x="677" y="276" width="1" height="29" fill="#000"/>
<rect x="675" y="295" width="5" height="3" fill="#000"/>
<rect x="676" y="296" width="3" height="1" fill="#ff0000"/>
<rect x="685" y="300" width="1" height="35" fill="#000"/>
<rect x="683" y="306" width="5" height="9" fill="#000"/>
<rect x="684" y="307" width="3" height="7" fill="#0000ff"/>
<rect x="693" y="284" width="1" height="26" fill="#000"/>
<rect x="691" y="285" width="5" height="18" fill="#000"/>
<rect x="692" y="286" width="3" height="16" fill="#ff0000"/>
<rect x="701" y="273" width="1" height="22" fill="#000"/>
<rect x="699" y="282" width="5" height="3" fill="#000"/>
<rect x="700" y="283" width="3" height="1" fill="#ff0000"/>
<rect x="709" y="279" width="1" height="17" fill="#000"/>
<rect x="707" y="283" width="5" height="4" fill="#000"/>
<rect x="708" y="284" width="3" height="2" fill="#0000ff"/>
<rect x="717" y="265" width="1" height="33" fill="#000"/>
<rect x="715" y="270" width="5" height="23" fill="#000"/>
<rect x="716" y="271" width="3" height="21" fill="#ff0000"/>
<rect x="725" y="265" width="1" height="34" fill="#000"/>
<rect x="723" y="268" width="5" height="27" fill="#000"/>
<rect x="724" y="269" width="3" height="25" fill="#0000ff"/>
<rect x="733" y="290" width="1" height="15" fill="#000"/>
<rect x="731" y="295" width="5" height="5" fill="#000"/>
<rect x="732" y="296" width="3" height="3" fill="#ff0000"/>
<rect x="741" y="277" width="1" height="25" fill="#000"/>
<rect x="739" y="279" width="5" height="22" fill="#000"/>
<rect x="740" y="280" width="3" height="20" fill="#ff0000"/>
<rect x="749" y="263" width="1" height="18" fill="#000"/>
<rect x="747" y="276" width="5" height="4" fill="#000"/>
<rect x="748" y="277" width="3" height="2" fill="#0000ff"/>
<rect x="757" y="274" width="1" height="19" fill="#000"/>
<rect x="755" y="279" width="5" height="10" fill="#000"/>
<rect x="756" y="280" width="3" height="8" fill="#0000ff"/>
<rect x="765" y="270" width="1" height="23" fill="#000"/>
<rect x="763" y="272" width="5" height="18" fill="#000"/>
<rect x="764" y="273" width="3" height="16" fill="#ff0000"/>
<rect x="773" y="266" width="1" height="13" fill="#000"/>
<rect x="771" y="272" width="5" height="3" fill="#000"/>
<rect x="772" y="273" width="3" height="1" fill="#0000ff"/>
<rect x="781" y="261" width="1" height="17" fill="#000"/>
<rect x="779" y="268" width="5" height="7" fill="#000"/>
<rect x="780" y="269" width="3" height="5" fill="#ff0000"/>
<rect x="789" y="264" width="1" height="14" fill="#000"/>
<rect x="787" y="269" width="5" height="9" fill="#000"/>
<rect x="788" y="270" width="3" height="7" fill="#0000ff"/>
<rect x="797" y="266" width="1" height="21" fill="#000"/>
<rect x="795" y="276" width="5" height="7" fill="#000"/>
<rect x="796" y="277" width="3" height="5" fill="#0000ff"/>
<rect x="805" y="273" width="1" height="17" fill="#000"/>
<rect x="803" y="276" width="5" height="7" fill="#000"/>
<rect x="804" y="277" width="3" height="5" fill="#ff0000"/>
<rect x="813" y="272" width="1" height="20" fill="#000"/>
<rect x="811" y="276" width="5" height="8" fill="#000"/>
<rect x="812" y="277" width="3" height="6" fill="#0000ff"/>
<rect x="821" y="268" width="1" height="15" fill="#000"/>
<rect x="819" y="270" width="5" height="13" fill="#000"/>
<rect x="820" y="271" width="3" height="11" fill="#ff0000"/>
<rect x="829" y="261" width="1" height="21" fill="#000"/>
<rect x="827" y="264" width="5" height="7" fill="#000"/>
<rect x="828" y="265" width="3" height="5" fill="#ff0000"/>
<rect x="837" y="256" width="1" height="12" fill="#000"/>
<rect x="835" y="259" width="5" height="5" fill="#000"/>
<rect x="836" y="260" width="3" height="3" fill="#ff0000"/>
<rect x="845" y="258" width="1" height="11" fill="#000"/>
<rect x="843" y="259" width="5" height="8" fill="#000"/>
<rect x="844" y="260" width="3" height="6" fill="#0000ff"/>
<rect x="853" y="246" width="1" height="25" fill="#000"/>
<rect x="851" y="248" width="5" height="20" fill="#000"/>
<rect x="852" y="249" width="3" height="18" fill="#ff0000"/>
<rect x="861" y="247" width="1" height="17" fill="#000"/>
<rect x="859" y="248" width="5" height="14" fill="#000"/>
<rect x="860" y="249" width="3" height="12" fill="#0000ff"/>
<rect x="869" y="252" width="1" height="17" fill="#000"/>
<rect x="867" y="260" width="5" height="5" fill="#000"/>
<rect x="868" y="261" width="3" height="3" fill="#0000ff"/>
<rect x="877" y="262" width="1" height="7" fill="#000"/>
<rect x="875" y="263" width="5" height="3" fill="#000"/>
<rect x="876" y="264" width="3" height="1" fill="#0000ff"/>
<rect x="885" y="255" width="1" height="17" fill="#000"/>
<rect x="883" y="265" width="5" height="4" fill="#000"/>
<rect x="884" y="266" width="3" height="2" fill="#0000ff"/>
<rect x="893" y="260" width="1" height="23" fill="#000"/>
<rect x="891" y="270" width="5" height="7" fill="#000"/>
<rect x="892" y="271" width="3" height="5" fill="#0000ff"/>
<rect x="901" y="267" width="1" height="19" fill="#000"/>
<rect x="899" y="277" width="5" height="2" fill="#000"/>
<rect x="909" y="268" width="1" height="15" fill="#000"/>
<rect x="907" y="270" width="5" height="9" fill="#000"/>
<rect x="908" y="271" width="3" height="7" fill="#ff0000"/>
<rect x="917" y="265" width="1" height="11" fill="#000"/>
<rect x="915" y="265" width="5" height="4" fill="#000"/>
<rect x="916" y="266" width="3" height="2" fill="#ff0000"/>
<rect x="925" y="257" width="1" height="32" fill="#000"/>
<rect x="923" y="265" width="5" height="19" fill="#000"/>
<rect x="924" y="266" width="3" height="17" fill="#0000ff"/>
<rect x="933" y="251" width="1" height="35" fill="#000"/>
<rect x="931" y="253" width="5" height="31" fill="#000"/>
<rect x="932" y="254" width="3" height="29" fill="#ff0000"/>
<rect x="941" y="207" width="1" height="59" fill="#000"/>
<rect x="939" y="228" width="5" height="26" fill="#000"/>
<rect x="940" y="229" width="3" height="24" fill="#ff0000"/>
<rect x="949" y="220" width="1" height="18" fill="#000"/>
<rect x="947" y="229" width="5" height="1" fill="#000"/>
<rect x="957" y="225" width="1" height="25" fill="#000"/>
<rect x="955" y="229" width="5" height="19" fill="#000"/>
<rect x="956" y="230" width="3" height="17" fill="#0000ff"/>
<rect x="965" y="246" width="1" height="23" fill="#000"/>
<rect x="963" y="248" width="5" height="19" fill="#000"/>
<rect x="964" y="249" width="3" height="17" fill="#0000ff"/>
<rect x="973" y="264" width="1" height="38" fill="#000"/>
<rect x="971" y="266" width="5" height="3" fill="#000"/>
<rect x="972" y="267" width="3" height="1" fill="#0000ff"/>
<rect x="981" y="254" width="1" height="23" fill="#000"/>
<rect x="979" y="257" width="5" height="12" fill="#000"/>
<rect x="980" y="258" width="3" height="10" fill="#ff0000"/>
<rect x="989" y="207" width="1" height="56" fill="#000"/>
<rect x="987" y="209" width="5" height="48" fill="#000"/>
<rect x="988" y="210" width="3" height="46" fill="#ff0000"/>
<rect x="997" y="178" width="1" height="37" fill="#000"/>
<rect x="995" y="196" width="5" height="14" fill="#000"/>
<rect x="996" y="197" width="3" height="12" fill="#ff0000"/>
<rect x="1005" y="175" width="1" height="30" fill="#000"/>
<rect x="1003" y="188" width="5" height="9" fill="#000"/>
<rect x="1004" y="189" width="3" height="7" fill="#ff0000"/>
<rect x="1013" y="164" width="1" height="40" fill="#000"/>
<rect x="1011" y="178" width="5" height="11" fill="#000"/>
<rect x="1012" y="179" width="3" height="9" fill="#ff0000"/>
<rect x="1021" y="164" width="1" height="18" fill="#000"/>
<rect x="1019" y="169" width="5" height="11" fill="#000"/>
<rect x="1020" y="170" width="3" height="9" fill="#ff0000"/>
<rect x="1029" y="138" width="1" height="36" fill="#000"/>
<rect x="1027" y="140" width="5" height="30" fill="#000"/>
<rect x="1028" y="141" width="3" height="28" fill="#ff0000"/>
<rect x="1037" y="139" width="1" height="36" fill="#000"/>
<rect x="1035" y="140" width="5" height="29" fill="#000"/>
<rect x="1036" y="141" width="3" height="27" fill="#0000ff"/>
<rect x="1045" y="156" width="1" height="44" fill="#000"/>
<rect x="1043" y="160" width="5" height="9" fill="#000"/>
<rect x="1044" y="161" width="3" height="7" fill="#ff0000"/>
</g>
<polyline points="13,626 22,626 34,630 46,633 58,634.8 70,634 83,634 92,633.5 101,632.3 109,629.3 121,628.7 130,627.5 141,626.7 157,622 173,619.3 189,612.6 206,601.5 217,591.7 225.5,583 236.3,570 249.7,556.5 260,545 266.5,539.4 277.7,529.7 292.3,524.8 313.2,515.2 324.5,512.7 337.4,500.6 360,480.5 369,471.4 381,458.5 401,448.8 429,445.2 445,443.2 461,439.1 485,437.1 497,434.4 521,421.9 545,410.5 569,401.7 580,399.5 589.4,394.8 600.2,384.7 616.3,368.5 633.8,351 649.9,335 660.6,328.2 671.4,319.5 680,316 689,315 717,304.4 741,300.8 757,296.6 785,288.7 805,286.4 825,283.2 845,277.5 865,272.8 881,270.8 901,271.5 925,271.5 941,266.1 957,261.1 965,261.8 981.3,261.8 985.7,258.1 994.6,251.5 1007.9,241.1 1016.7,233 1028.6,220.4 1036,215.3 1045.6,208.6" fill="none" stroke="#ff0000" stroke-width="2" stroke-linejoin="round" shape-rendering="crispEdges"/>
<polyline points="13,630.8 22,633.5 34,638.4 45,639.6 52,641.8 64,641.8 72,639.6 80,638.4 87,637.8 95,634 102,630.5 109,626.3 116,625.7 121,625.3 130,623.3 141,621 157,614.6 165,614.6 173,612.6 189,597.8 200,590 205,584 213.4,574.6 225.5,555.8 236.3,537.6 244.4,527.6 253,516.3 260,508.7 269.7,498.2 276.1,493.9 281,494.2 292.3,499 301.9,497.1 310,493.9 324.5,491.8 327.7,489.4 340.6,473.2 360,449.8 365,443.4 381,422 401,421 413,425.7 421,430.4 445,433 453,429.5 469,428.7 477,432.4 497,426 509,421.2 521,409 537,396.4 557,389.7 573,385.6 581,385.6 597.5,368.5 604.2,355 619,336.3 631,320.2 647.2,300 653,294.5 661,292.4 669,287.6 677,289.2 685,294 689,293 709,288.7 717,285.7 725,286.3 733,288.7 741,286.3 757,284.5 773,279.6 785,278 797,277.8 809,277.8 817,278.4 829,273.3 845,269 853,264.8 861,263.9 881,265 901,270 921,269.2 929,270.7 941,260 949,252.2 957,251.9 965,253.7 970.9,256.7 981.3,256.4 988.7,247.8 997.5,236 1009.4,220.4 1021.9,204.2 1028.6,190.9 1036,185.7 1045.6,179" fill="none" stroke="#0000ff" stroke-width="2" stroke-linejoin="round" shape-rendering="crispEdges"/>
<polyline points="13,662 853.7,246.7 933.5,292 941.3,205.8 973.4,301.6 1029,137.3" fill="none" stroke="#8b4513" stroke-width="2" stroke-linejoin="miter" shape-rendering="crispEdges"/>
<path d="M1061,171 L1069.5,179.5 H1064.5 V192 H1057 V179.5 H1052 Z" fill="#fff" stroke="#ff0000" stroke-width="1.6"/>
<path d="M13,669 L13,675 L19,675 Z" fill="#c8c8c8"/>
<path d="M1049,110 h9 l-4.5,5 z" fill="#b4b4b4"/>
<rect x="12.5" y="109.5" width="1304" height="566" fill="none" stroke="#000" shape-rendering="crispEdges"/>
<rect x="14" y="112" width="236" height="11" fill="#fff"/>
<path d="M16,116 h8 l-4,5 z" fill="#000"/>
<text transform="translate(28,121) scale(0.917,1)" font-size="10" fill="#000" stroke="#000" stroke-width="0.08">GBPJPYh,Weekly</text>
<text transform="translate(108.3,121) scale(0.9,1)" font-size="10" fill="#000" stroke="#000" stroke-width="0.08">185.796</text>
<text transform="translate(144.4,121) scale(0.9,1)" font-size="10" fill="#000" stroke="#000" stroke-width="0.08">187.239</text>
<text transform="translate(180,121) scale(0.9,1)" font-size="10" fill="#000" stroke="#000" stroke-width="0.08">181.612</text>
<text transform="translate(216.4,121) scale(0.9,1)" font-size="10" fill="#000" stroke="#000" stroke-width="0.08">186.695</text>
<g shape-rendering="crispEdges">
<rect x="1317" y="111" width="3" height="1" fill="#000"/>
<rect x="1317" y="144" width="3" height="1" fill="#000"/>
<rect x="1317" y="177" width="3" height="1" fill="#000"/>
<rect x="1317" y="210" width="3" height="1" fill="#000"/>
<rect x="1317" y="243" width="3" height="1" fill="#000"/>
<rect x="1317" y="276" width="3" height="1" fill="#000"/>
<rect x="1317" y="309" width="3" height="1" fill="#000"/>
<rect x="1317" y="342" width="3" height="1" fill="#000"/>
<rect x="1317" y="375" width="3" height="1" fill="#000"/>
<rect x="1317" y="408" width="3" height="1" fill="#000"/>
<rect x="1317" y="441" width="3" height="1" fill="#000"/>
<rect x="1317" y="474" width="3" height="1" fill="#000"/>
<rect x="1317" y="507" width="3" height="1" fill="#000"/>
<rect x="1317" y="540" width="3" height="1" fill="#000"/>
<rect x="1317" y="573" width="3" height="1" fill="#000"/>
<rect x="1317" y="606" width="3" height="1" fill="#000"/>
<rect x="1317" y="639" width="3" height="1" fill="#000"/>
<rect x="1317" y="672" width="3" height="1" fill="#000"/>
</g>
<text transform="translate(1322,114) scale(0.9,1)" font-size="10" fill="#000" stroke="#000" stroke-width="0.08">193.070</text>
<text transform="translate(1322,147) scale(0.9,1)" font-size="10" fill="#000" stroke="#000" stroke-width="0.08">188.780</text>
<text transform="translate(1322,180) scale(0.9,1)" font-size="10" fill="#000" stroke="#000" stroke-width="0.08">184.490</text>
<text transform="translate(1322,213) scale(0.9,1)" font-size="10" fill="#000" stroke="#000" stroke-width="0.08">180.070</text>
<text transform="translate(1322,246) scale(0.9,1)" font-size="10" fill="#000" stroke="#000" stroke-width="0.08">175.780</text>
<text transform="translate(1322,279) scale(0.9,1)" font-size="10" fill="#000" stroke="#000" stroke-width="0.08">171.490</text>
<text transform="translate(1322,312) scale(0.9,1)" font-size="10" fill="#000" stroke="#000" stroke-width="0.08">167.070</text>
<text transform="translate(1322,345) scale(0.9,1)" font-size="10" fill="#000" stroke="#000" stroke-width="0.08">162.780</text>
<text transform="translate(1322,378) scale(0.9,1)" font-size="10" fill="#000" stroke="#000" stroke-width="0.08">158.490</text>
<text transform="translate(1322,411) scale(0.9,1)" font-size="10" fill="#000" stroke="#000" stroke-width="0.08">154.070</text>
<text transform="translate(1322,444) scale(0.9,1)" font-size="10" fill="#000" stroke="#000" stroke-width="0.08">149.780</text>
<text transform="translate(1322,477) scale(0.9,1)" font-size="10" fill="#000" stroke="#000" stroke-width="0.08">145.490</text>
<text transform="translate(1322,510) scale(0.9,1)" font-size="10" fill="#000" stroke="#000" stroke-width="0.08">141.070</text>
<text transform="translate(1322,543) scale(0.9,1)" font-size="10" fill="#000" stroke="#000" stroke-width="0.08">136.780</text>
<text transform="translate(1322,576) scale(0.9,1)" font-size="10" fill="#000" stroke="#000" stroke-width="0.08">132.490</text>
<text transform="translate(1322,609) scale(0.9,1)" font-size="10" fill="#000" stroke="#000" stroke-width="0.08">128.070</text>
<text transform="translate(1322,642) scale(0.9,1)" font-size="10" fill="#000" stroke="#000" stroke-width="0.08">123.780</text>
<text transform="translate(1322,675) scale(0.9,1)" font-size="10" fill="#000" stroke="#000" stroke-width="0.08">119.490</text>
<rect x="1318" y="154" width="41" height="11" fill="#000"/>
<text transform="translate(1322,163) scale(0.9,1)" font-size="10" fill="#fff" stroke="#fff" stroke-width="0.08">186.695</text>
<rect x="13" y="676" width="1" height="3" fill="#000"/>
<text transform="translate(12.3,688) scale(0.918,1)" font-size="9.8" fill="#000" stroke="#000" stroke-width="0.08">24 Jun 2012</text>
<rect x="77" y="676" width="1" height="3" fill="#000"/>
<text transform="translate(76.3,688) scale(0.918,1)" font-size="9.8" fill="#000" stroke="#000" stroke-width="0.08">19 Aug 2012</text>
<rect x="141" y="676" width="1" height="3" fill="#000"/>
<text transform="translate(140.3,688) scale(0.918,1)" font-size="9.8" fill="#000" stroke="#000" stroke-width="0.08">14 Oct 2012</text>
<rect x="205" y="676" width="1" height="3" fill="#000"/>
<text transform="translate(204.3,688) scale(0.918,1)" font-size="9.8" fill="#000" stroke="#000" stroke-width="0.08">9 Dec 2012</text>
<rect x="269" y="676" width="1" height="3" fill="#000"/>
<text transform="translate(268.3,688) scale(0.918,1)" font-size="9.8" fill="#000" stroke="#000" stroke-width="0.08">3 Feb 2013</text>
<rect x="333" y="676" width="1" height="3" fill="#000"/>
<text transform="translate(332.3,688) scale(0.918,1)" font-size="9.8" fill="#000" stroke="#000" stroke-width="0.08">31 Mar 2013</text>
<rect x="397" y="676" width="1" height="3" fill="#000"/>
<text transform="translate(396.3,688) scale(0.918,1)" font-size="9.8" fill="#000" stroke="#000" stroke-width="0.08">26 May 2013</text>
<rect x="461" y="676" width="1" height="3" fill="#000"/>
<text transform="translate(460.3,688) scale(0.918,1)" font-size="9.8" fill="#000" stroke="#000" stroke-width="0.08">21 Jul 2013</text>
<rect x="525" y="676" width="1" height="3" fill="#000"/>
<text transform="translate(524.3,688) scale(0.918,1)" font-size="9.8" fill="#000" stroke="#000" stroke-width="0.08">15 Sep 2013</text>
<rect x="589" y="676" width="1" height="3" fill="#000"/>
<text transform="translate(588.3,688) scale(0.918,1)" font-size="9.8" fill="#000" stroke="#000" stroke-width="0.08">10 Nov 2013</text>
<rect x="653" y="676" width="1" height="3" fill="#000"/>
<text transform="translate(652.3,688) scale(0.918,1)" font-size="9.8" fill="#000" stroke="#000" stroke-width="0.08">5 Jan 2014</text>
<rect x="717" y="676" width="1" height="3" fill="#000"/>
<text transform="translate(716.3,688) scale(0.918,1)" font-size="9.8" fill="#000" stroke="#000" stroke-width="0.08">2 Mar 2014</text>
<rect x="781" y="676" width="1" height="3" fill="#000"/>
<text transform="translate(780.3,688) scale(0.918,1)" font-size="9.8" fill="#000" stroke="#000" stroke-width="0.08">27 Apr 2014</text>
<rect x="845" y="676" width="1" height="3" fill="#000"/>
<text transform="translate(844.3,688) scale(0.918,1)" font-size="9.8" fill="#000" stroke="#000" stroke-width="0.08">22 Jun 2014</text>
<rect x="909" y="676" width="1" height="3" fill="#000"/>
<text transform="translate(908.3,688) scale(0.918,1)" font-size="9.8" fill="#000" stroke="#000" stroke-width="0.08">17 Aug 2014</text>
<rect x="973" y="676" width="1" height="3" fill="#000"/>
<text transform="translate(972.3,688) scale(0.918,1)" font-size="9.8" fill="#000" stroke="#000" stroke-width="0.08">12 Oct 2014</text>
<rect x="1037" y="676" width="1" height="3" fill="#000"/>
<text transform="translate(1036.3,688) scale(0.918,1)" font-size="9.8" fill="#000" stroke="#000" stroke-width="0.08">7 Dec 2014</text>
<rect x="9" y="695" width="1352" height="1" fill="#000"/>
<rect x="9" y="696" width="1352" height="19" fill="#f0f0f0"/>
<rect x="9" y="696" width="1" height="18" fill="#808080"/>
<rect x="8" y="715" width="1353" height="1" fill="#ffffff"/>
<rect x="692" y="695" width="104" height="19" fill="#000"/><rect x="693" y="695" width="102" height="17" fill="#fff"/>
<text x="22" y="708" font-size="11" letter-spacing="-0.4" fill="#646464">EURUSDh,Weekly</text>
<rect x="120" y="698" width="1" height="13" fill="#404040"/>
<text x="129.5" y="708" font-size="11" letter-spacing="-0.4" fill="#646464">USDCHFh,H1</text>
<rect x="204" y="698" width="1" height="13" fill="#404040"/>
<text x="215" y="708" font-size="11" letter-spacing="-0.4" fill="#646464">GBPUSDh,Weekly</text>
<rect x="312" y="698" width="1" height="13" fill="#404040"/>
<text x="323" y="708" font-size="11" letter-spacing="-0.4" fill="#646464">USDJPYh,H1</text>
<rect x="396" y="698" width="1" height="13" fill="#404040"/>
<text x="406.4" y="708" font-size="11" letter-spacing="-0.4" fill="#646464">EURJPYh,Daily</text>
<rect x="488" y="698" width="1" height="13" fill="#404040"/>
<text x="499.6" y="708" font-size="11" letter-spacing="-0.4" fill="#646464">GBPCHFh,Daily</text>
<rect x="584" y="698" width="1" height="13" fill="#404040"/>
<text x="594.5" y="708" font-size="11" letter-spacing="-0.4" fill="#646464">AUDUSDh,Weekly</text>
<text x="702.5" y="708" font-size="11" letter-spacing="-0.4" fill="#000">GBPJPYh,Weekly</text>
<text x="806" y="708" font-size="11" letter-spacing="-0.4" fill="#646464">EURGBPh,Weekly</text>
<rect x="902" y="698" width="1" height="13" fill="#404040"/>
<text x="914" y="708" font-size="11" letter-spacing="-0.4" fill="#646464">USDCADh,Daily</text>
<rect x="999" y="698" width="1" height="13" fill="#404040"/>
<text x="1010" y="708" font-size="11" letter-spacing="-0.4" fill="#646464">XAUUSDh,Daily</text>
<rect x="1096" y="698" width="1" height="13" fill="#404040"/>
<text x="1107" y="708" font-size="11" letter-spacing="-0.4" fill="#646464">USDCADh,H4</text>
<rect x="1184" y="698" width="1" height="13" fill="#404040"/>
<text x="1193" y="708" font-size="11" letter-spacing="-0.4" fill="#646464">NZDUSDh,H4</text>
<rect x="1268" y="698" width="1" height="13" fill="#404040"/>
<path d="M1336,702 v6 l-3,-3 z" fill="#a0a0a0"/><path d="M1350,702 v6 l3,-3 z" fill="#a0a0a0"/>
<rect x="8" y="716" width="1353" height="28" fill="#f0f0f0"/>
<text x="10" y="730.5" font-size="11.5" fill="#000">Для справки, нажмите F1</text>
<rect x="636" y="719" width="1" height="16" fill="#a0a0a0"/>
<rect x="752" y="719" width="1" height="16" fill="#a0a0a0"/>
<rect x="853" y="719" width="1" height="16" fill="#a0a0a0"/>
<rect x="924" y="719" width="1" height="16" fill="#a0a0a0"/>
<rect x="995" y="719" width="1" height="16" fill="#a0a0a0"/>
<rect x="1064" y="719" width="1" height="16" fill="#a0a0a0"/>
<rect x="1134" y="719" width="1" height="16" fill="#a0a0a0"/>
<rect x="1199" y="719" width="1" height="16" fill="#a0a0a0"/>
<text x="641" y="730.5" font-size="11.5" fill="#000">Default</text>
<rect x="1205" y="721" width="2" height="9" fill="#4a7800"/>
<rect x="1205" y="731" width="2" height="3" fill="#900000"/>
<rect x="1208" y="721" width="2" height="8" fill="#4a7800"/>
<rect x="1208" y="730" width="2" height="4" fill="#900000"/>
<rect x="1211" y="721" width="2" height="7" fill="#4a7800"/>
<rect x="1211" y="729" width="2" height="5" fill="#900000"/>
<rect x="1214" y="721" width="2" height="6" fill="#4a7800"/>
<rect x="1214" y="728" width="2" height="6" fill="#900000"/>
<rect x="1217" y="721" width="2" height="5" fill="#4a7800"/>
<rect x="1217" y="727" width="2" height="7" fill="#900000"/>
<rect x="1220" y="721" width="2" height="4" fill="#4a7800"/>
<rect x="1220" y="726" width="2" height="8" fill="#900000"/>
<rect x="1223" y="721" width="2" height="3" fill="#4a7800"/>
<rect x="1223" y="725" width="2" height="9" fill="#900000"/>
<rect x="1226" y="721" width="2" height="2" fill="#4a7800"/>
<rect x="1226" y="724" width="2" height="10" fill="#900000"/>
<text x="1268" y="729.8" font-size="11.5" fill="#000">40/3 kb</text>
<path d="M1347,736 l14,-14 M1351,736 l10,-10 M1355,736 l6,-6" stroke="#a0a0a0"/>
<rect x="0" y="728" width="1366" height="1" fill="#7595ab"/>
<rect x="0" y="729" width="1366" height="7" fill="#46789a" fill-opacity="0.6"/>
<rect x="0" y="736" width="1366" height="8" fill="#5b96be"/>
<rect x="175" y="729" width="59" height="15" fill="#ffffff" fill-opacity="0.22"/>
<rect x="175.5" y="728.5" width="58" height="20" fill="none" stroke="#4f7590" stroke-width="1"/>
<rect x="176.5" y="729.5" width="56" height="20" fill="none" stroke="#d8e6ef" stroke-opacity="0.8" stroke-width="1"/>
<rect x="237" y="729" width="59" height="15" fill="#ffffff" fill-opacity="0.22"/>
<rect x="237.5" y="728.5" width="58" height="20" fill="none" stroke="#4f7590" stroke-width="1"/>
<rect x="238.5" y="729.5" width="56" height="20" fill="none" stroke="#d8e6ef" stroke-opacity="0.8" stroke-width="1"/>
<rect x="299" y="729" width="59" height="15" fill="#ffffff" fill-opacity="0.22"/>
<rect x="299.5" y="728.5" width="58" height="20" fill="none" stroke="#4f7590" stroke-width="1"/>
<rect x="300.5" y="729.5" width="56" height="20" fill="none" stroke="#d8e6ef" stroke-opacity="0.8" stroke-width="1"/>
<rect x="361" y="729" width="59" height="15" fill="#ffffff" fill-opacity="0.22"/>
<rect x="361.5" y="728.5" width="58" height="20" fill="none" stroke="#4f7590" stroke-width="1"/>
<rect x="362.5" y="729.5" width="56" height="20" fill="none" stroke="#d8e6ef" stroke-opacity="0.8" stroke-width="1"/>
<rect x="423" y="729" width="59" height="15" fill="#ffffff" fill-opacity="0.22"/>
<rect x="423.5" y="728.5" width="58" height="20" fill="none" stroke="#4f7590" stroke-width="1"/>
<rect x="424.5" y="729.5" width="56" height="20" fill="none" stroke="#d8e6ef" stroke-opacity="0.8" stroke-width="1"/>
<rect x="485" y="729" width="59" height="15" fill="#ffffff" fill-opacity="0.22"/>
<rect x="485.5" y="728.5" width="58" height="20" fill="none" stroke="#4f7590" stroke-width="1"/>
<rect x="486.5" y="729.5" width="56" height="20" fill="none" stroke="#d8e6ef" stroke-opacity="0.8" stroke-width="1"/>
<rect x="671" y="729" width="59" height="15" fill="#ffffff" fill-opacity="0.22"/>
<rect x="671.5" y="728.5" width="58" height="20" fill="none" stroke="#4f7590" stroke-width="1"/>
<rect x="672.5" y="729.5" width="56" height="20" fill="none" stroke="#d8e6ef" stroke-opacity="0.8" stroke-width="1"/>
<rect x="733" y="729" width="59" height="15" fill="#ffffff" fill-opacity="0.22"/>
<rect x="733.5" y="728.5" width="58" height="20" fill="none" stroke="#4f7590" stroke-width="1"/>
<rect x="734.5" y="729.5" width="56" height="20" fill="none" stroke="#d8e6ef" stroke-opacity="0.8" stroke-width="1"/>
<path d="M12,736 L23,734.5 V744 H12 Z M24,734.3 L38,732.5 V744 H24 Z" fill="#fff"/>
<rect x="66" y="733" width="30" height="11" fill="#0a8a1a"/><path d="M74,744 v-5 h14 v5 z" fill="#fff"/><path d="M77,739 c0,-4 8,-4 8,0" stroke="#fff" fill="none" stroke-width="1.5"/>
<path d="M128,737 L145,733 V744 H128 Z" fill="#2b579a"/><rect x="145" y="737" width="12" height="7" fill="#fff"/><path d="M147,739.5 h8 M147,742 h8" stroke="#2b579a"/>
<circle cx="205.5" cy="747" r="12.5" fill="#e33b2e"/><path d="M193,747 a12.5,12.5 0 0 1 5,-10 l5,10 z" fill="#2aa24a"/><path d="M218,747 a12.5,12.5 0 0 0 -3,-8 l-9,8 z" fill="#f6c40f"/><circle cx="205.5" cy="747" r="5.5" fill="#fff"/><circle cx="205.5" cy="747" r="4" fill="#4a8af4"/>
<circle cx="267" cy="746" r="11" fill="#1e5bb8"/><path d="M258,744 c2,-9 10,-11 14,-8 c-5,0 -9,4 -9,10 z" fill="#f39a1e"/><circle cx="270" cy="746" r="5" fill="#fff" fill-opacity="0.7"/>
<circle cx="329" cy="747" r="11" fill="#0aa3e8"/><circle cx="321" cy="739" r="5" fill="#0aa3e8"/><path d="M325,744 c2,-3 8,-3 8,0" stroke="#fff" stroke-width="2.5" fill="none"/>
<circle cx="391" cy="748" r="12" fill="#f29024"/><path d="M381,744 a10,6 0 0 1 20,0 z" fill="#fde6c8"/>
<path d="M435,744 V737 h7 l2,-2 h6 v2 h16 v7 z" fill="#f2d48a" stroke="#c8a040" stroke-width="0.8"/><rect x="439" y="736" width="3" height="2" fill="#3a3"/><rect x="450" y="738" width="3" height="2" fill="#c33"/><rect x="456" y="740" width="3" height="2" fill="#39c"/>
<rect x="509.5" y="733.5" width="12" height="10" fill="#2ab0f0" stroke="#202020"/><path d="M505,744 l3,-3" stroke="#202020" stroke-width="2"/>
<path d="M562,744 v-13 h20 l8,10 v3 z" fill="#a8d0ee"/><circle cx="576" cy="744" r="5" fill="#fff" fill-opacity="0.8"/>
<path d="M624,744 v-13 h19 l8,10 v3 z" fill="#f4f4f4"/><text x="630" y="746" font-size="16" font-weight="bold" fill="#e02020">я</text>
<circle cx="701" cy="748" r="12" fill="#f0f0f0"/><path d="M690,737 l11,9 l12,-11 l-3,-2 l-9,9 l-8,-7 z" fill="#e81a1a"/>
<circle cx="763" cy="750" r="12.5" fill="#b01e10"/><ellipse cx="760" cy="741" rx="6" ry="3" fill="#e05a40" fill-opacity="0.7"/>
<path d="M1155,745 l3.5,-3.5 l3.5,3.5" stroke="#fff" fill="none" stroke-width="1.2"/>
<rect x="1175.5" y="741.5" width="15" height="4" fill="#f0f0f0" stroke="#505050"/>
<rect x="1200" y="741" width="2" height="3" fill="#fff"/><rect x="1204" y="741" width="10" height="3" fill="#e8e8e8"/><rect x="1205" y="741" width="8" height="3" fill="#505050" fill-opacity="0.5"/>
<rect x="1223.5" y="741.5" width="14" height="4" rx="1.5" fill="none" stroke="#f0f0f0" stroke-width="1.5"/>
<text x="1307" y="745" font-size="11.5" fill="#fff">15:05</text>
</svg></body></html>
